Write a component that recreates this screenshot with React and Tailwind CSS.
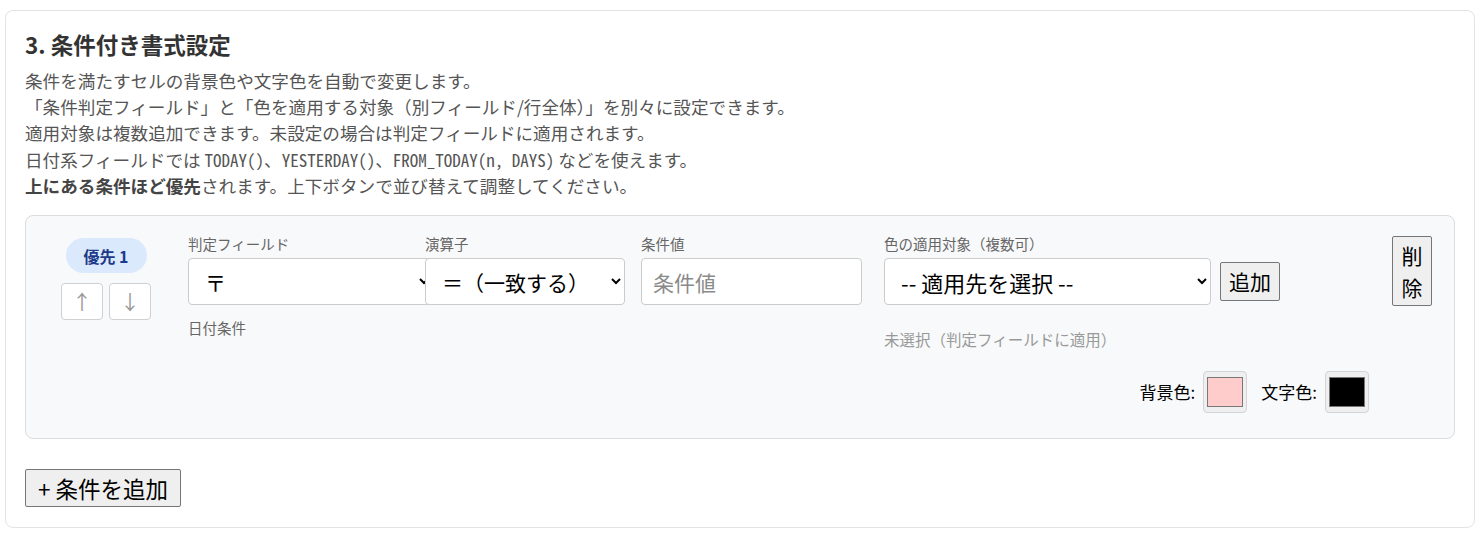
const font = { fontFamily: '"Noto Sans CJK JP", "Noto Sans", sans-serif' };

function ColorSwatch({ color }) {
  return (
    <div className="flex h-[42px] w-[44px] items-center justify-center rounded-[4px] border border-[#d4d4d4] bg-[#efefef]">
      <div className={`h-[30px] w-[36px] border border-[#777] ${color}`} />
    </div>
  );
}

const codeCls = "font-['Noto_Sans_Mono_CJK_JP','Liberation_Mono',monospace] text-[17px]";

export default function App() {
  return (
    <div className="bg-white px-[5px] pt-[10px] pb-[10px]" style={font}>
      <section className="rounded-lg border border-[#e3e3e3] bg-white px-[19px] pt-[17px] pb-[20px]">
        <h2 className="mb-2 text-[22.5px] font-bold leading-[32px] text-[#333]">
          3. 条件付き書式設定
        </h2>
        <div className="text-[17.6px] leading-[26.2px] text-[#555]">
          <p>条件を満たすセルの背景色や文字色を自動で変更します。</p>
          <p>「条件判定フィールド」と「色を適用する対象（別フィールド/行全体）」を別々に設定できます。</p>
          <p>適用対象は複数追加できます。未設定の場合は判定フィールドに適用されます。</p>
          <p>
            日付系フィールドでは{" "}
            <code className={codeCls}>TODAY()</code>、
            <code className={codeCls}>YESTERDAY()</code>、
            <code className={codeCls}>FROM_TODAY(n, DAYS)</code>{" "}
            などを使えます。
          </p>
          <p>
            <strong className="font-bold text-[#444]">上にある条件ほど優先</strong>
            されます。上下ボタンで並び替えて調整してください。
          </p>
        </div>

        {/* Condition rule */}
        <div className="mt-[16px] flex rounded-lg border border-[#dcdcdc] bg-[#f8f9fa] pt-[20px] pr-[22px] pb-[25px] pl-[35px]">
          <div className="flex w-[90px] shrink-0 flex-col items-center pt-[2px]">
            <span className="flex h-[35px] w-[81px] items-center justify-center rounded-full bg-[#dbe9fd] text-[16px] font-bold text-[#1e3a8a]">
              優先 1
            </span>
            <div className="mt-[10px] flex gap-[6px]">
              <button className="flex h-[37px] w-[42px] items-center justify-center rounded-[4px] border border-[#d0d0d0] bg-white text-[20px] text-[#999]">
                ↑
              </button>
              <button className="flex h-[37px] w-[42px] items-center justify-center rounded-[4px] border border-[#d0d0d0] bg-white text-[20px] text-[#999]">
                ↓
              </button>
            </div>
          </div>

          <div className="ml-[37px] flex-1">
            <div className="flex items-start">
              <div className="w-[237px] shrink-0">
                <label className="mb-[6px] block text-[14.5px] leading-4 text-[#666]">判定フィールド</label>
                <select className="h-[47px] w-[245px] rounded-[4px] border border-[#cccccc] bg-white px-3 text-[21px] text-black">
                  <option>〒</option>
                </select>
                <p className="mt-[13px] text-[14.5px] leading-5 text-[#666]">日付条件</p>
              </div>
              <div className="w-[200px] shrink-0">
                <label className="mb-[6px] block text-[14.5px] leading-4 text-[#666]">演算子</label>
                <select className="h-[47px] w-[200px] rounded-[4px] border border-[#cccccc] bg-white px-3 text-[21px] text-black">
                  <option>＝（一致する）</option>
                </select>
              </div>
              <div className="ml-4 w-[221px] shrink-0">
                <label className="mb-[6px] block text-[14.5px] leading-4 text-[#666]">条件値</label>
                <input
                  placeholder="条件値"
                  className="h-[47px] w-[221px] rounded-[4px] border border-[#cccccc] bg-white px-[11px] text-[21px] text-black placeholder:text-[#8a8a8a]"
                />
              </div>
              <div className="ml-[22px]">
                <label className="mb-[6px] block text-[14.5px] leading-4 text-[#666]">色の適用対象（複数可）</label>
                <div className="flex items-center gap-[9px]">
                  <select className="h-[47px] w-[327px] rounded-[4px] border border-[#cccccc] bg-white px-3 text-[22px] text-black">
                    <option>-- 適用先を選択 --</option>
                  </select>
                  <button className="h-[39px] rounded-[2px] border border-[#767676] bg-[#efefef] px-[8px] text-[21px] leading-[31px] text-black">
                    追加
                  </button>
                </div>
                <p className="mt-[24px] text-[15.5px] leading-5 text-[#999]">未選択（判定フィールドに適用）</p>
              </div>
            </div>

            <div className="mt-[22px] flex items-center justify-end gap-[8px] text-[17px] text-black">
              <span>背景色:</span>
              <ColorSwatch color="bg-[#ffcccc]" />
              <span className="ml-[6px]">文字色:</span>
              <ColorSwatch color="bg-black" />
            </div>
          </div>

          <div className="ml-[23px] shrink-0">
            <button className="w-[40px] rounded-[2px] border border-[#767676] bg-[#efefef] py-[2px] text-[21px] leading-[32px] text-black">
              削<br />除
            </button>
          </div>
        </div>

        <button className="mt-[30px] h-[38px] w-[156px] rounded-[2px] border border-[#767676] bg-[#efefef] text-[22.5px] leading-[30px] text-black">
          +&nbsp;条件を追加
        </button>
      </section>
    </div>
  );
}
